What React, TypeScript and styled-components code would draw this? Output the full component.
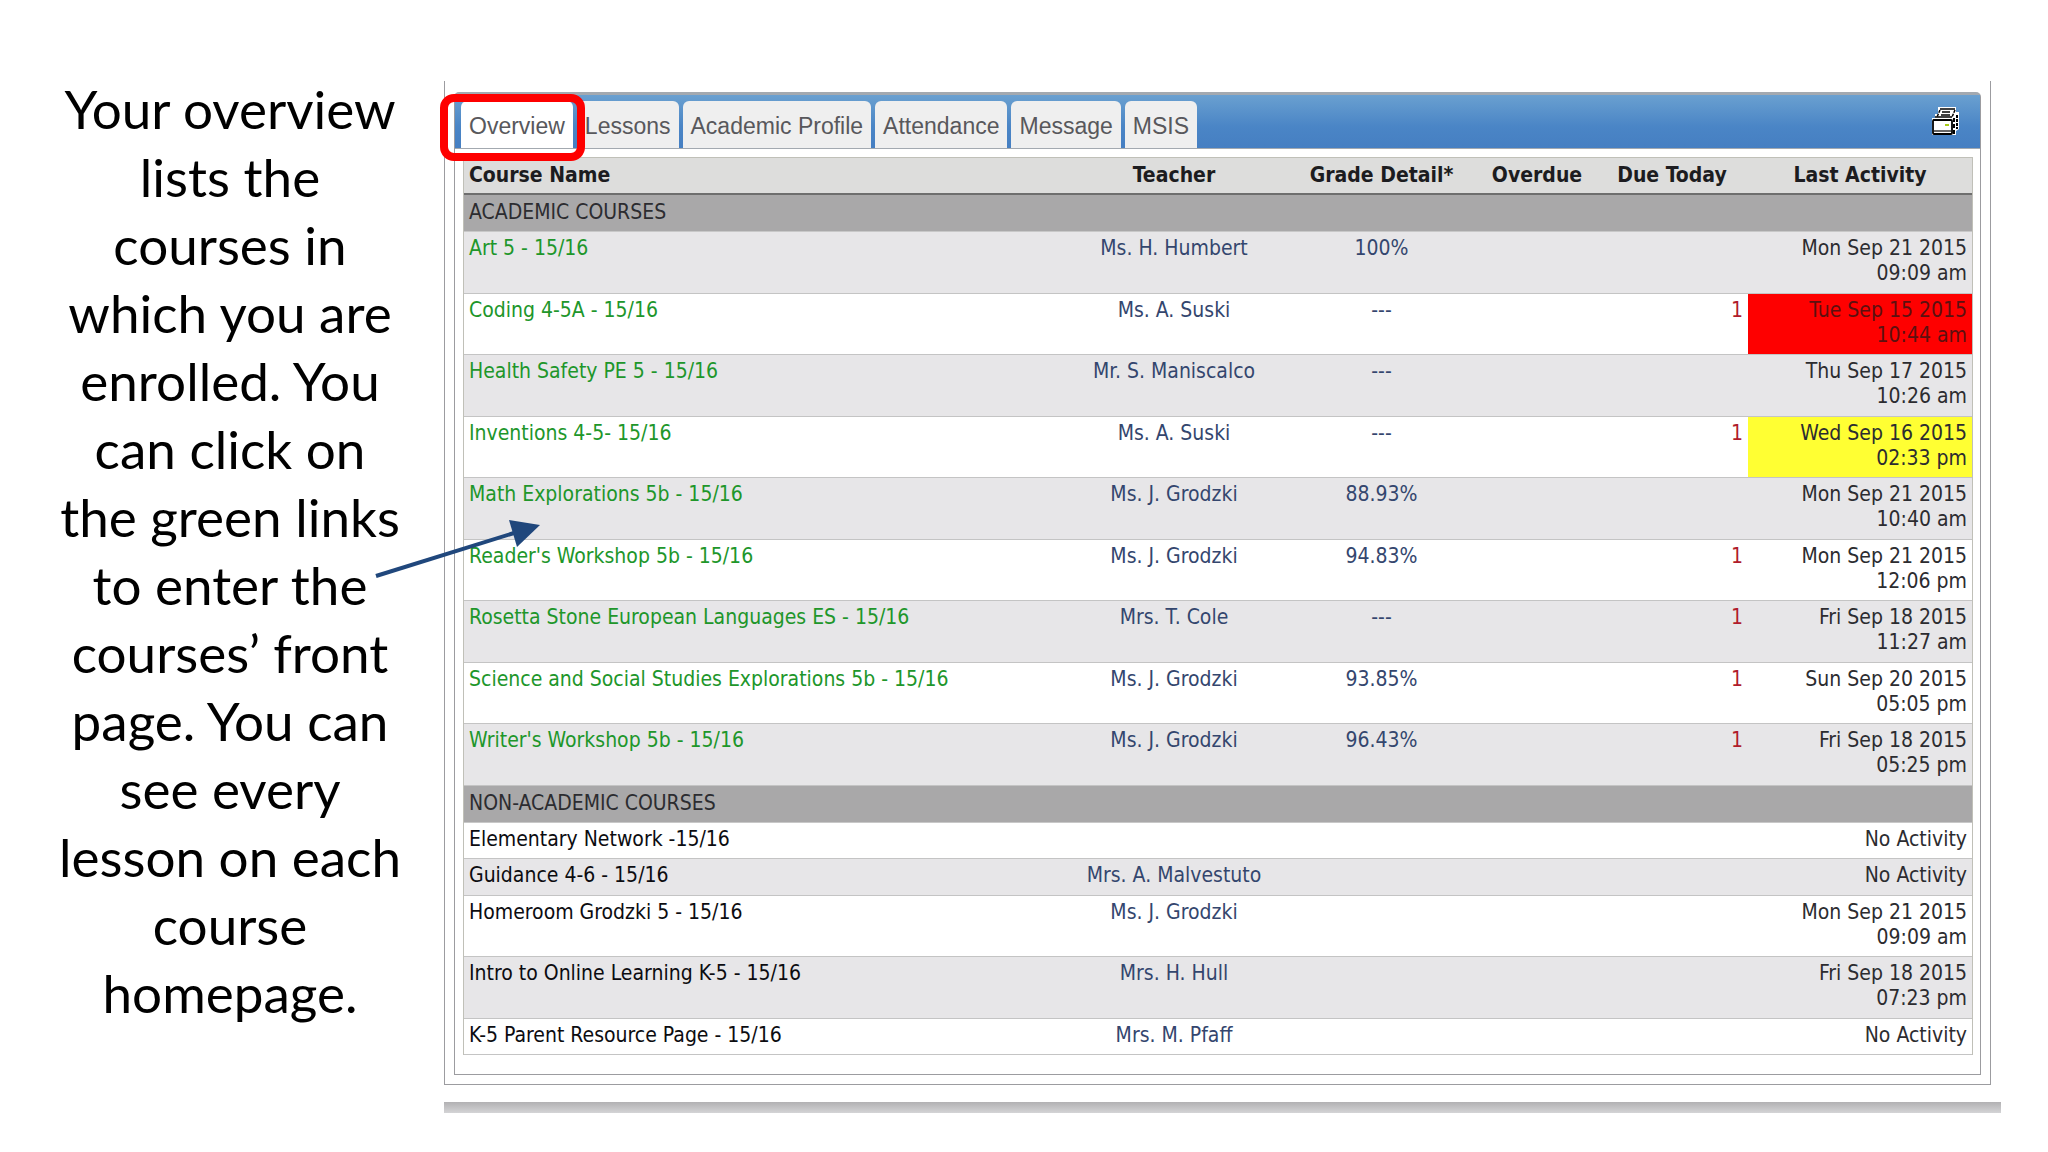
import React from "react";
import styled, { createGlobalStyle } from "styled-components";

const GlobalStyle = createGlobalStyle`
  *, *::before, *::after { box-sizing: border-box; }
  body { margin: 0; background: #fff; }
  button { font: inherit; color: inherit; border: 0; background: none; padding: 0; margin: 0; cursor: pointer; }
  a { color: inherit; text-decoration: none; }
`;

const Page = styled.main`
  display: grid;
  grid-template-columns: 444px minmax(0, 1fr);
  align-items: start;
  min-height: 100vh;
  padding-right: 47px;
  font-family: "DejaVu Sans Condensed", "Noto Sans", sans-serif;
`;

const Caption = styled.p`
  display: flex;
  flex-direction: column;
  align-items: center;
  margin: 0;
  padding: 75px 44px 0 60px;
  font-family: Lato, sans-serif;
  font-size: 53px;
  line-height: 68px;
  color: #000;
  text-align: center;
  white-space: nowrap;
`;

const Slide = styled.div`
  position: relative;
  padding-top: 81px;
`;

const Frame = styled.section`
  border: 1px solid #9c9ca0;
  border-top: 0;
  margin-right: 10px;
  padding: 11px 9px 9px;
`;

const Panel = styled.div`
  border: 1px solid #9c9ca0;
  border-top: 3px solid #a3a9b0;
  border-radius: 5px 5px 0 0;
  padding-bottom: 19px;
`;

const TabBar = styled.nav`
  display: flex;
  align-items: flex-end;
  gap: 4px;
  height: 54px;
  padding: 0 20px 0 6px;
  border-bottom: 1px solid #a3a9b0;
  background: linear-gradient(#6aa0d0, #4a85c6 60%, #467fc2);
`;

const Tab = styled.button<{ $active?: boolean }>`
  position: relative;
  height: 47px;
  padding: 4px 8px 0;
  border-radius: 6px 6px 0 0;
  background: ${(p) => (p.$active ? "#fff" : "#efefef")};
  color: #58585c;
  font-family: "Liberation Sans", Arial, sans-serif;
  font-size: 23px;
  line-height: 43px;
`;

const Highlight = styled.span`
  position: absolute;
  inset: -7px -12px -13px -21px;
  border: 8px solid #fe0000;
  border-radius: 14px;
  pointer-events: none;
  z-index: 1;
`;

const PrintButton = styled.button`
  display: flex;
  align-self: center;
  margin-left: auto;
`;

const Courses = styled.table`
  width: calc(100% - 15px);
  margin: 8px 7px 0 8px;
  border-collapse: separate;
  border-spacing: 0;
  table-layout: fixed;
  border: 1px solid #c0c0b8;
  border-bottom: 0;
  font-size: 21px;
  line-height: 25px;
  color: #2c2c30;
`;

const Col = styled.col<{ $w?: number }>`
  width: ${(p) => (p.$w ? `${p.$w}px` : "auto")};
`;

const Head = styled.th<{ $left?: boolean }>`
  height: 37px;
  padding: 0 5px;
  background: #dddddc;
  border-bottom: 2px solid #6e6e6e;
  color: #1c1c20;
  text-align: ${(p) => (p.$left ? "left" : "center")};
  white-space: nowrap;
`;

const Group = styled.th`
  height: 37px;
  padding: 0 5px 2px;
  background: #a9a8a9;
  border-bottom: 1px solid #c8c8c8;
  font-weight: 400;
  text-align: left;
`;

const Row = styled.tr<{ $shaded: boolean }>`
  background: ${(p) => (p.$shaded ? "#e7e6e8" : "#fff")};
  & > td {
    padding: 4px 5px ${(p) => (p.$shaded ? 7 : 6)}px;
  }
`;

const tones = {
  plain: "#2c2c30",
  name: "#0c0c10",
  link: "#20962a",
  blue: "#34466e",
  red: "#b01c2c",
};

const Cell = styled.td<{
  $tone?: keyof typeof tones;
  $align?: "left" | "center" | "right";
  $fill?: string;
}>`
  border-bottom: 1px solid #c4c4c4;
  vertical-align: top;
  color: ${(p) => (p.$fill === "#fe0000" ? "#5c1010" : tones[p.$tone ?? "plain"])};
  text-align: ${(p) => p.$align ?? "left"};
  background: ${(p) => p.$fill ?? "transparent"};
  white-space: pre-line;
`;

const FooterBar = styled.div`
  height: 11px;
  margin-top: 17px;
  background: linear-gradient(#b2b1b3, #d4d4d6);
`;

const Arrow = styled.svg`
  position: absolute;
  left: -70px;
  top: 516px;
  pointer-events: none;
`;

const captionLines = [
  "Your overview", "lists the", "courses in", "which you are", "enrolled. You",
  "can click on", "the green links", "to enter the", "courses’ front",
  "page. You can", "see every", "lesson on each", "course", "homepage.",
];

const tabs = ["Overview", "Lessons", "Academic Profile", "Attendance", "Message", "MSIS"];

type Course = {
  name: string;
  teacher?: string;
  grade?: string;
  due?: number;
  activity: string;
  fill?: string;
};

const academic: Course[] = [
  { name: "Art 5 - 15/16", teacher: "Ms. H. Humbert", grade: "100%", activity: "Mon Sep 21 2015\n09:09 am" },
  { name: "Coding 4-5A - 15/16", teacher: "Ms. A. Suski", grade: "---", due: 1, activity: "Tue Sep 15 2015\n10:44 am", fill: "#fe0000" },
  { name: "Health Safety PE 5 - 15/16", teacher: "Mr. S. Maniscalco", grade: "---", activity: "Thu Sep 17 2015\n10:26 am" },
  { name: "Inventions 4-5- 15/16", teacher: "Ms. A. Suski", grade: "---", due: 1, activity: "Wed Sep 16 2015\n02:33 pm", fill: "#ffff33" },
  { name: "Math Explorations 5b - 15/16", teacher: "Ms. J. Grodzki", grade: "88.93%", activity: "Mon Sep 21 2015\n10:40 am" },
  { name: "Reader's Workshop 5b - 15/16", teacher: "Ms. J. Grodzki", grade: "94.83%", due: 1, activity: "Mon Sep 21 2015\n12:06 pm" },
  { name: "Rosetta Stone European Languages ES - 15/16", teacher: "Mrs. T. Cole", grade: "---", due: 1, activity: "Fri Sep 18 2015\n11:27 am" },
  { name: "Science and Social Studies Explorations 5b - 15/16", teacher: "Ms. J. Grodzki", grade: "93.85%", due: 1, activity: "Sun Sep 20 2015\n05:05 pm" },
  { name: "Writer's Workshop 5b - 15/16", teacher: "Ms. J. Grodzki", grade: "96.43%", due: 1, activity: "Fri Sep 18 2015\n05:25 pm" },
];

const nonAcademic: Course[] = [
  { name: "Elementary Network -15/16", activity: "No Activity" },
  { name: "Guidance 4-6 - 15/16", teacher: "Mrs. A. Malvestuto", activity: "No Activity" },
  { name: "Homeroom Grodzki 5 - 15/16", teacher: "Ms. J. Grodzki", activity: "Mon Sep 21 2015\n09:09 am" },
  { name: "Intro to Online Learning K-5 - 15/16", teacher: "Mrs. H. Hull", activity: "Fri Sep 18 2015\n07:23 pm" },
  { name: "K-5 Parent Resource Page - 15/16", teacher: "Mrs. M. Pfaff", activity: "No Activity" },
];

function CourseRow({ course, shaded, linked }: { course: Course; shaded: boolean; linked: boolean }) {
  return (
    <Row $shaded={shaded}>
      <Cell $tone={linked ? "link" : "name"}>
        {linked ? <a href="#course">{course.name}</a> : course.name}
      </Cell>
      <Cell $tone="blue" $align="center">
        {course.teacher && <a href="#teacher">{course.teacher}</a>}
      </Cell>
      <Cell $tone="blue" $align="center">
        {course.grade}
      </Cell>
      <Cell />
      <Cell $tone="red" $align="right">
        {course.due}
      </Cell>
      <Cell $align="right" $fill={course.fill}>
        {course.activity}
      </Cell>
    </Row>
  );
}

function PrinterIcon() {
  return (
    <svg width="28" height="30" viewBox="0 0 28 30" aria-hidden="true">
      <path d="M6 0h18v5h3v17l-3 2v4H0V11h3V7h3z" fill="#fff" />
      <path d="M8 2h15" stroke="#000" strokeWidth="1.5" />
      <path d="M8 3l-3 7M23 3l-3 7" stroke="#000" strokeWidth="1.5" strokeDasharray="3 1" />
      <path d="M10 5h8M9 8h9" stroke="#000" strokeWidth="1.3" />
      <path d="M3 10h17" stroke="#000" strokeWidth="1.5" />
      <path d="M1 13h18" stroke="#000" strokeWidth="1.5" />
      <path d="M25 8v14" stroke="#000" strokeWidth="2" strokeDasharray="3 1" />
      <path d="M22 11v16" stroke="#000" strokeWidth="2" strokeDasharray="4 2" />
      <rect x="1" y="13" width="19" height="14" rx="1" fill="#fff" stroke="#000" strokeWidth="1.8" />
      <path d="M2 24h17" stroke="#000" strokeWidth="1.2" />
      <rect x="13" y="17" width="4" height="2" fill="#a8cc18" />
    </svg>
  );
}

export default function App() {
  return (
    <>
      <GlobalStyle />
      <Page>
        <Caption>
          {captionLines.map((line) => (
            <span key={line}>{line}</span>
          ))}
        </Caption>
        <Slide>
          <Frame>
            <Panel>
              <TabBar>
                {tabs.map((label, i) => (
                  <Tab key={label} type="button" $active={i === 0}>
                    {label}
                    {i === 0 && <Highlight />}
                  </Tab>
                ))}
                <PrintButton type="button" aria-label="Print">
                  <PrinterIcon />
                </PrintButton>
              </TabBar>
              <Courses>
                <colgroup>
                  <Col />
                  <Col $w={222} />
                  <Col $w={193} />
                  <Col $w={118} />
                  <Col $w={152} />
                  <Col $w={224} />
                </colgroup>
                <thead>
                  <tr>
                    <Head $left>Course Name</Head>
                    <Head>Teacher</Head>
                    <Head>Grade Detail*</Head>
                    <Head>Overdue</Head>
                    <Head>Due Today</Head>
                    <Head>Last Activity</Head>
                  </tr>
                </thead>
                <tbody>
                  <tr>
                    <Group colSpan={6}>ACADEMIC COURSES</Group>
                  </tr>
                  {academic.map((c, i) => (
                    <CourseRow key={c.name} course={c} shaded={i % 2 === 0} linked />
                  ))}
                  <tr>
                    <Group colSpan={6}>NON-ACADEMIC COURSES</Group>
                  </tr>
                  {nonAcademic.map((c, i) => (
                    <CourseRow key={c.name} course={c} shaded={i % 2 === 1} linked={false} />
                  ))}
                </tbody>
              </Courses>
            </Panel>
          </Frame>
          <FooterBar />
          <Arrow width="170" height="66" viewBox="0 0 170 66" aria-hidden="true">
            <path d="M2 60L140 17" stroke="#20477c" strokeWidth="4" />
            <path d="M135 4l31 5-23 22z" fill="#20477c" />
          </Arrow>
        </Slide>
      </Page>
    </>
  );
}
